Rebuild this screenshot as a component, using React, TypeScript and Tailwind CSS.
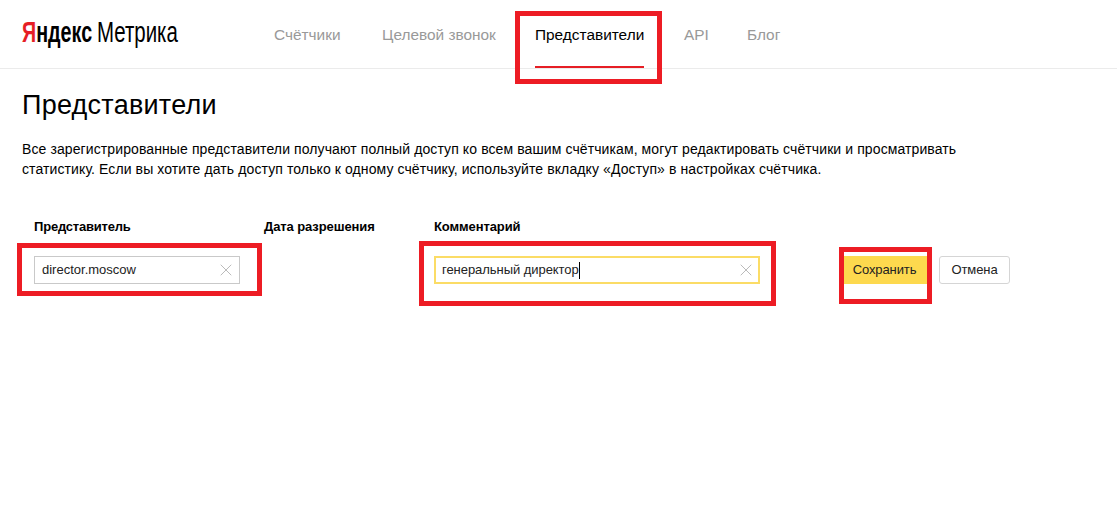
import { X } from "lucide-react";

const navItems = [
  { label: "Счётчики", active: false, width: "w-[68px]" },
  { label: "Целевой звонок", active: false, width: "w-[113px]" },
  { label: "Представители", active: true, width: "w-[109px]" },
  { label: "API", active: false, width: "w-[23px]" },
  { label: "Блог", active: false, width: "w-[34px]" },
];

function Field({ value, focused, width }: { value: string; focused?: boolean; width: string }) {
  return (
    <div
      className={`flex h-7 items-center justify-between text-[13px] text-[#222] ${width} ${
        focused ? "border-2 border-[#fbdc66] pl-1.5 pr-0.5 tracking-[-0.05px]" : "border border-[#c9c9c9] pl-[7px] pr-[3px]"
      }`}
    >
      <span className="flex items-center">
        {value}
        {focused && <span className="h-[17px] w-px bg-black" />}
      </span>
      <X className="h-5 w-5 text-[#b5b5b5]" strokeWidth={1.1} />
    </div>
  );
}

export default function App() {
  return (
    <div className="relative h-[521px] w-[1117px] overflow-hidden bg-white font-['Liberation_Sans',Arial,sans-serif] text-black">
      <header className="flex h-[69px] border-b border-[#ebebeb] pl-[22px]">
        <div className="flex w-[252px] items-start pt-[14px] text-[29px] leading-[36px]">
          <span className="inline-block w-[75px] origin-left scale-x-[0.68] whitespace-nowrap font-bold">
            <span className="text-[#e61e25]">Я</span>ндекс
          </span>
          <span className="inline-block origin-left scale-x-[0.705] whitespace-nowrap">Метрика</span>
        </div>
        <nav className="flex gap-10 text-[15.4px]">
          {navItems.map((item) => (
            <a
              key={item.label}
              className={`flex items-start whitespace-nowrap border-b-2 pt-[25px] leading-5 ${item.width} ${
                item.active ? "h-[68px] border-[#e61e25] text-black" : "h-[69px] border-transparent text-[#999]"
              }`}
            >
              {item.label}
            </a>
          ))}
        </nav>
      </header>

      <main className="pl-[22px]">
        <h1 className="mt-[18px] text-[27px] leading-[36px] tracking-[0.25px]">Представители</h1>
        <p className="mt-4 w-[960px] text-[14px] leading-[20px] tracking-[0.1px]">
          Все зарегистрированные представители получают полный доступ ко всем вашим счётчикам, могут редактировать счётчики и просматривать статистику. Если вы хотите дать доступ только к одному счётчику, используйте вкладку «Доступ» в настройках счётчика.
        </p>

        <div className="mt-[40px] grid grid-cols-[230px_170px_410px_auto] pl-3">
          <div className="text-[13px] font-bold leading-4 tracking-[-0.2px]">Представитель</div>
          <div className="text-[13px] font-bold leading-4 tracking-[-0.1px]">Дата разрешения</div>
          <div className="text-[13px] font-bold leading-4 tracking-[-0.1px]">Комментарий</div>
          <div />
          <div className="mt-[21px]">
            <Field value="director.moscow" width="w-[206px]" />
          </div>
          <div />
          <div className="mt-[21px]">
            <Field value="генеральный директор" focused width="w-[326px]" />
          </div>
          <div className="mt-[21px] flex gap-3">
            <button className="h-7 w-[83px] bg-[#fdd94e] pr-0.5 text-[13px] tracking-[-0.1px] text-[#222]">Сохранить</button>
            <button className="h-7 w-[71px] rounded-[3px] border border-[#d5d5d5] text-[13px] tracking-[-0.1px] text-[#222]">Отмена</button>
          </div>
        </div>
      </main>

      {/* red annotation frames drawn over the page */}
      <div className="absolute left-[515px] top-[11px] h-[73px] w-[147px] border-[5px] border-[#ed1c24]" />
      <div className="absolute left-[17px] top-[243px] h-[53px] w-[245px] border-[5px] border-[#ed1c24]" />
      <div className="absolute left-[419px] top-[241px] h-[65px] w-[357px] border-[5px] border-[#ed1c24]" />
      <div className="absolute left-[839px] top-[247px] h-[57px] w-[93px] border-[5px] border-[#ed1c24]" />
    </div>
  );
}
